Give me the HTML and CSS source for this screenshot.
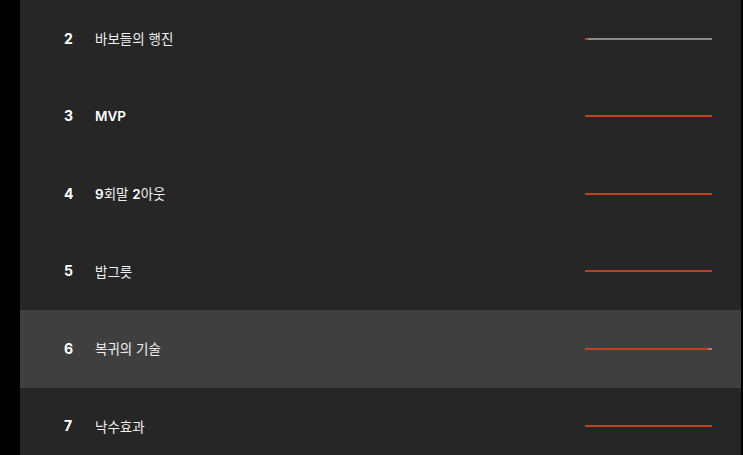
FILE: index.html
```html
<!DOCTYPE html>
<html lang="ko">
<head>
  <meta charset="UTF-8">
  <meta name="viewport" content="width=device-width, initial-scale=1.0">
  <title>Episodes</title>
  <link rel="stylesheet" href="styles.css">
</head>
<body>
  <div class="frame">
    <ul class="episodes">
      <li class="episode">
        <span class="num">2</span>
        <span class="title">바보들의 행진</span>
        <div class="track"><div class="fill" style="width: 2%"></div></div>
      </li>
      <li class="episode">
        <span class="num">3</span>
        <span class="title"><span class="lat">MVP</span></span>
        <div class="track"><div class="fill" style="width: 100%"></div></div>
      </li>
      <li class="episode">
        <span class="num">4</span>
        <span class="title"><span class="lat">9</span>회말 <span class="lat">2</span>아웃</span>
        <div class="track"><div class="fill" style="width: 100%"></div></div>
      </li>
      <li class="episode">
        <span class="num">5</span>
        <span class="title">밥그릇</span>
        <div class="track"><div class="fill" style="width: 100%"></div></div>
      </li>
      <li class="episode active">
        <span class="num">6</span>
        <span class="title">복귀의 기술</span>
        <div class="track"><div class="fill" style="width: 97%"></div></div>
      </li>
      <li class="episode">
        <span class="num">7</span>
        <span class="title">낙수효과</span>
        <div class="track"><div class="fill" style="width: 100%"></div></div>
      </li>
    </ul>
  </div>
</body>
</html>
```

FILE: styles.css
```css
html, body {
  margin: 0;
  padding: 0;
  background: #000;
  height: 100%;
  overflow: hidden;
}

.frame {
  margin-left: 20px;
  width: 721px;
  height: 455px;
  background: #262626;
}

.episodes {
  list-style: none;
  margin: 0;
  padding: 0;
}

.episode {
  display: flex;
  align-items: center;
  height: 77.5px;
  padding-left: 44px;
  font-family: "Inter", "Noto Sans CJK KR", sans-serif;
  color: #fff;
  font-size: 14px;
}

.episode.active {
  background: #3f3f3f;
}

.num {
  flex: 0 0 31px;
  font-weight: 700;
  margin-top: -1px;
}

.title {
  flex: 1 1 auto;
  font-weight: 400;
  font-size: 13.5px;
  color: #f0f0f0;
  margin-top: -1px;
}

.lat {
  font-weight: 600;
  color: #fff;
}

.track {
  flex: 0 0 127px;
  height: 2px;
  margin-right: 29px;
  background: #8c8c8c;
}

.fill {
  height: 100%;
  background: #c1401f;
}
```
